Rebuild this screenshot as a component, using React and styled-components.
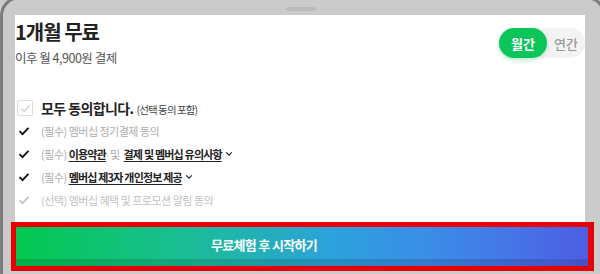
import styled, { createGlobalStyle } from 'styled-components';

const GlobalStyle = createGlobalStyle`
  html, body {
    margin: 0;
    padding: 0;
    width: 600px;
    height: 274px;
    overflow: hidden;
    background: #cbcbcb;
    font-family: "Noto Sans CJK KR", "Noto Sans", sans-serif;
  }
`;

const Screen = styled.div`
  position: relative;
  box-sizing: border-box;
  width: 606px;
  height: 300px;
  margin-top: -4px;
  border: 3px solid #7c7c7c;
  border-radius: 20px;
  padding: 16px 18px 0 12px;
  display: flex;
  flex-direction: column;
`;

const Handle = styled.div`
  position: absolute;
  top: 8px;
  left: 283px;
  width: 30px;
  height: 4px;
  border-radius: 2px;
  background: #bcbcbc;
`;

const Sheet = styled.div`
  position: relative;
  height: 207px;
  background: #fff;
  display: flex;
  flex-direction: column;
`;

const Header = styled.div`
  display: flex;
  justify-content: space-between;
  align-items: flex-start;
`;

const Title = styled.h1`
  margin: 3px 0 0;
  font-size: 20px;
  line-height: 28px;
  font-weight: 700;
  color: #222;
  letter-spacing: -1px;
`;

const Sub = styled.p`
  margin: 3px 0 0;
  font-size: 12.5px;
  line-height: 18px;
  color: #555;
  letter-spacing: -0.5px;
`;

const Toggle = styled.div`
  display: flex;
  margin-top: 13px;
  background: #f3f3f3;
  border-radius: 16px;
  height: 30px;
`;

const ToggleItem = styled.div`
  width: ${p => (p.$active ? '48px' : '38px')};
  display: flex;
  align-items: center;
  justify-content: center;
  border-radius: 15px;
  font-size: 13px;
  font-weight: ${p => (p.$active ? 700 : 500)};
  color: ${p => (p.$active ? '#fff' : '#9a9a9a')};
  background: ${p => (p.$active ? '#0bc45a' : 'transparent')};
  box-shadow: ${p => (p.$active ? '0 2px 4px rgba(11,196,90,0.3)' : 'none')};
`;

const List = styled.div`
  margin-top: 32px;
  display: flex;
  flex-direction: column;
`;

const AllRow = styled.div`
  display: flex;
  align-items: center;
  height: 18px;
  margin-bottom: 2px;
`;

const Box = styled.div`
  box-sizing: border-box;
  width: 16px;
  height: 16px;
  margin-left: 2px;
  margin-right: 8px;
  border: 1px solid #dcdcdc;
  border-radius: 2px;
  display: flex;
  align-items: center;
  justify-content: center;
`;

const AllText = styled.span`
  font-size: 14px;
  font-weight: 700;
  color: #222;
  letter-spacing: -0.6px;
`;

const AllNote = styled.span`
  margin-left: 3px;
  font-size: 10.5px;
  font-weight: 400;
  color: #444;
  letter-spacing: -0.9px;
`;

const Row = styled.div`
  display: flex;
  align-items: center;
  height: 23px;
  font-size: 11px;
  letter-spacing: -0.5px;
  color: ${p => (p.$faint ? '#c2c2c2' : '#acacac')};
`;

const Check = styled.span`
  width: 23px;
  margin-left: 3px;
  display: flex;
  align-items: center;
`;

const Link = styled.span`
  color: #222;
  font-weight: 700;
  letter-spacing: -0.8px;
  text-decoration: underline;
  text-underline-offset: 2px;
`;

const Gap = styled.span`
  margin: 0 4px;
`;

const Fade = styled.div`
  position: absolute;
  left: 0;
  right: 0;
  bottom: 0;
  height: 16px;
  background: linear-gradient(rgba(255,255,255,0), rgba(255,255,255,0.8));
`;

const Highlight = styled.div`
  box-sizing: border-box;
  height: 49px;
  margin: 0 -9px 0 -4px;
  border: 5px solid #e60000;
  border-right-width: 6px;
  background: #e60000;
`;

const CTA = styled.div`
  height: 100%;
  display: flex;
  align-items: center;
  justify-content: center;
  padding: 0 76px 4px 0;
  box-sizing: border-box;
  background: linear-gradient(90deg, #03c84f 0%, #1bbd96 30%, #2ca2db 55%, #3b8de8 72%, #4f5ee4 100%);
  box-shadow: inset 0 -7px 0 rgba(0, 0, 0, 0.13);
  color: #fff;
  font-size: 13px;
  font-weight: 700;
  letter-spacing: -0.7px;
`;

const Tick = ({ color = '#111', size = 12 }) => (
  <svg width={size} height={size} viewBox="0 0 12 12">
    <path d="M1.5 6.2 L4.5 9.2 L10.5 2.8" fill="none" stroke={color} strokeWidth="1.8" />
  </svg>
);

const Chevron = () => (
  <svg width="8" height="8" viewBox="0 0 10 10" style={{ marginLeft: 3 }}>
    <path d="M1.5 3 L5 6.5 L8.5 3" fill="none" stroke="#222" strokeWidth="1.5" />
  </svg>
);

export default function App() {
  return (
    <>
      <GlobalStyle />
      <Screen>
        <Handle />
        <Sheet>
          <Header>
            <div>
              <Title>1개월 무료</Title>
              <Sub>이후 월 4,900원 결제</Sub>
            </div>
            <Toggle>
              <ToggleItem $active>월간</ToggleItem>
              <ToggleItem>연간</ToggleItem>
            </Toggle>
          </Header>
          <List>
            <AllRow>
              <Box>
                <Tick color="#d8d8d8" size={11} />
              </Box>
              <AllText>
                모두 동의합니다.<AllNote>(선택 동의 포함)</AllNote>
              </AllText>
            </AllRow>
            <Row>
              <Check><Tick /></Check>
              (필수) 멤버십 정기결제 동의
            </Row>
            <Row>
              <Check><Tick /></Check>
              (필수)&nbsp;<Link>이용약관</Link><Gap>및</Gap><Link>결제 및 멤버십 유의사항</Link>
              <Chevron />
            </Row>
            <Row>
              <Check><Tick /></Check>
              (필수)&nbsp;<Link>멤버십 제3자 개인정보 제공</Link>
              <Chevron />
            </Row>
            <Row $faint>
              <Check><Tick color="#c4c4c4" /></Check>
              (선택) 멤버십 혜택 및 프로모션 알림 동의
            </Row>
          </List>
          <Fade />
        </Sheet>
        <Highlight>
          <CTA>무료체험 후 시작하기</CTA>
        </Highlight>
      </Screen>
    </>
  );
}
